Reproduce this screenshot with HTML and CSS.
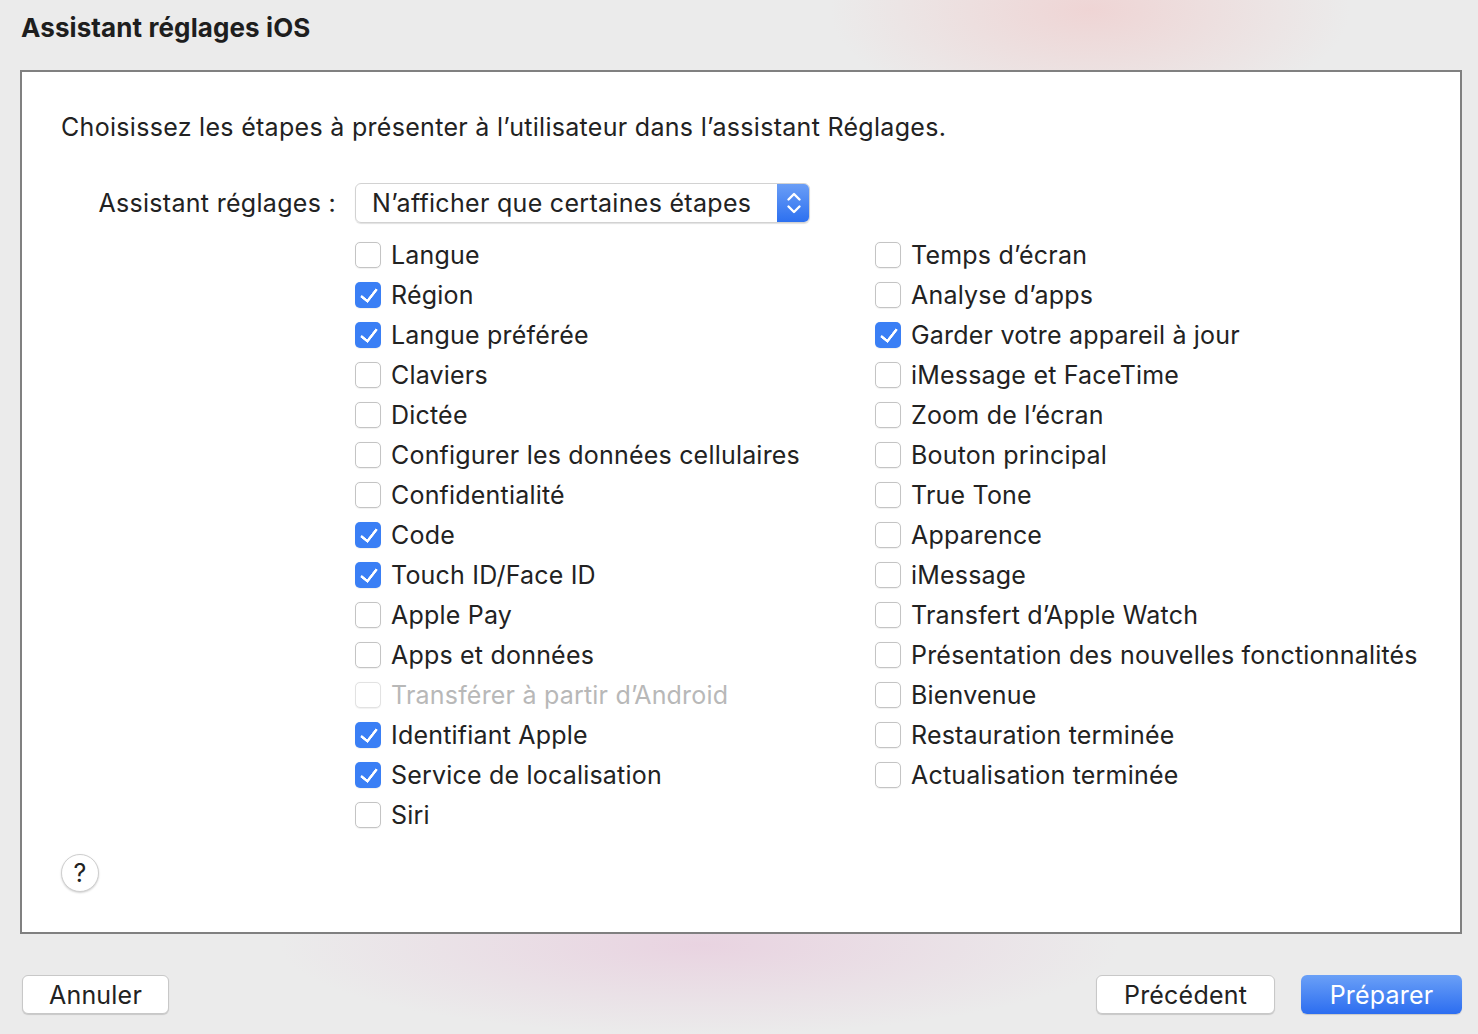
FILE: index.html
```html
<!DOCTYPE html>
<html lang="fr">
<head>
<meta charset="utf-8">
<title>Assistant réglages iOS</title>
<link rel="stylesheet" href="styles.css">
</head>
<body>
<div class="window">
  <h1 class="title">Assistant réglages iOS</h1>
  <div class="panel">
    <p class="desc">Choisissez les étapes à présenter à l’utilisateur dans l’assistant Réglages.</p>
    <div class="form-row">
      <span class="form-label">Assistant réglages :</span>
      <div class="popup">
        <span class="popup-text">N’afficher que certaines étapes</span>
        <span class="popup-arrows">
          <svg width="18" height="28" viewBox="0 0 18 28"><path d="M3.5 10.5 L9 5 L14.5 10.5 M3.5 17.5 L9 23 L14.5 17.5" fill="none" stroke="#fff" stroke-width="2.4" stroke-linecap="round" stroke-linejoin="round"/></svg>
        </span>
      </div>
    </div>
    <div class="checks">
      <div class="col">
        <label class="check"><span class="box"></span>Langue</label>
        <label class="check"><span class="box on"></span>Région</label>
        <label class="check"><span class="box on"></span>Langue préférée</label>
        <label class="check"><span class="box"></span>Claviers</label>
        <label class="check"><span class="box"></span>Dictée</label>
        <label class="check"><span class="box"></span>Configurer les données cellulaires</label>
        <label class="check"><span class="box"></span>Confidentialité</label>
        <label class="check"><span class="box on"></span>Code</label>
        <label class="check"><span class="box on"></span>Touch ID/Face ID</label>
        <label class="check"><span class="box"></span>Apple Pay</label>
        <label class="check"><span class="box"></span>Apps et données</label>
        <label class="check disabled"><span class="box"></span>Transférer à partir d’Android</label>
        <label class="check"><span class="box on"></span>Identifiant Apple</label>
        <label class="check"><span class="box on"></span>Service de localisation</label>
        <label class="check"><span class="box"></span>Siri</label>
      </div>
      <div class="col">
        <label class="check"><span class="box"></span>Temps d’écran</label>
        <label class="check"><span class="box"></span>Analyse d’apps</label>
        <label class="check"><span class="box on"></span>Garder votre appareil à jour</label>
        <label class="check"><span class="box"></span>iMessage et FaceTime</label>
        <label class="check"><span class="box"></span>Zoom de l’écran</label>
        <label class="check"><span class="box"></span>Bouton principal</label>
        <label class="check"><span class="box"></span>True Tone</label>
        <label class="check"><span class="box"></span>Apparence</label>
        <label class="check"><span class="box"></span>iMessage</label>
        <label class="check"><span class="box"></span>Transfert d’Apple Watch</label>
        <label class="check"><span class="box"></span>Présentation des nouvelles fonctionnalités</label>
        <label class="check"><span class="box"></span>Bienvenue</label>
        <label class="check"><span class="box"></span>Restauration terminée</label>
        <label class="check"><span class="box"></span>Actualisation terminée</label>
      </div>
    </div>
    <button class="help">?</button>
  </div>
  <div class="footer">
    <button class="btn cancel">Annuler</button>
    <div class="right">
      <button class="btn">Précédent</button>
      <button class="btn primary">Préparer</button>
    </div>
  </div>
</div>
</body>
</html>
```
FILE: styles.css
```css
html, body {
  margin: 0;
  padding: 0;
  height: 100%;
}
body {
  font-family: Inter, "Noto Sans", "Liberation Sans", sans-serif;
  color: #222;
  background-color: #ebebeb;
  background-image:
    radial-gradient(ellipse 260px 110px at 1090px 10px, rgba(240, 205, 205, 0.75), rgba(240, 205, 205, 0) 100%),
    radial-gradient(ellipse 420px 90px at 700px 945px, rgba(232, 205, 222, 0.8), rgba(232, 205, 222, 0) 100%);
  overflow: hidden;
}
.window {
  width: 1478px;
  height: 1034px;
  box-sizing: border-box;
  padding: 0 16px 0 20px;
  display: flex;
  flex-direction: column;
}
.title {
  margin: 12px 0 0 1px;
  font-size: 26px;
  font-weight: 700;
  letter-spacing: 0.1px;
  color: #1e1e1e;
  line-height: 32px;
  height: 58px;
}
.panel {
  background: #fff;
  border: 2px solid #808080;
  height: 864px;
  box-sizing: border-box;
  padding: 0 0 0 39px;
  display: flex;
  flex-direction: column;
}
.desc {
  margin: 38px 0 0 0;
  font-size: 25px;
  letter-spacing: 0.3px;
  line-height: 34px;
  color: #222;
}
.form-row {
  display: flex;
  align-items: center;
  margin-top: 39px;
  height: 40px;
}
.form-label {
  width: 275px;
  text-align: right;
  font-size: 25px;
  letter-spacing: 0.3px;
  margin-right: 19px;
}
.popup {
  width: 455px;
  height: 40px;
  box-sizing: border-box;
  border: 1px solid #d2d2d2;
  border-radius: 6px;
  box-shadow: 0 1px 1px rgba(0,0,0,0.12);
  display: flex;
  align-items: stretch;
  overflow: hidden;
}
.popup-text {
  flex: 1;
  font-size: 25px;
  padding-left: 16px;
  display: flex;
  align-items: center;
  letter-spacing: 0.3px;
}
.popup-arrows {
  width: 33px;
  background: linear-gradient(#6c9ff6, #2b6ff0);
  display: flex;
  align-items: center;
  justify-content: center;
  margin: -1px -1px -1px 0;
}
.checks {
  display: flex;
  margin-left: 294px;
  margin-top: 12px;
}
.col {
  display: flex;
  flex-direction: column;
}
.col:first-child {
  width: 520px;
}
.check {
  height: 40px;
  display: flex;
  align-items: center;
  font-size: 25px;
  color: #222;
  letter-spacing: 0.2px;
}
.box {
  width: 26px;
  height: 26px;
  box-sizing: border-box;
  border: 1px solid #c4c4c4;
  border-radius: 5px;
  background: #fff;
  margin-right: 10px;
  flex: none;
  box-shadow: 0 0.5px 1px rgba(0,0,0,0.06);
  position: relative;
}
.box.on {
  border: none;
  background: #3a7ff5;
}
.box.on::after {
  content: "";
  position: absolute;
  left: 9px;
  top: 3px;
  width: 7px;
  height: 14px;
  border: solid #fff;
  border-width: 0 3px 3px 0;
  border-radius: 1px;
  transform: rotate(38deg);
}
.check.disabled {
  color: #b8b8b8;
}
.check.disabled .box {
  border-color: #e2e2e2;
}
.help {
  margin-top: 19px;
  width: 38px;
  height: 38px;
  border-radius: 50%;
  border: 1px solid #cfcfcf;
  background: #fff;
  box-shadow: 0 1px 2px rgba(0,0,0,0.18);
  font-family: Inter, "Noto Sans", sans-serif;
  font-size: 25px;
  color: #222;
  padding: 0;
  display: flex;
  align-items: center;
  justify-content: center;
}
.footer {
  display: flex;
  justify-content: space-between;
  align-items: center;
  margin-top: 41px;
}
.right {
  display: flex;
  gap: 26px;
}
.btn {
  height: 39px;
  box-sizing: border-box;
  border: 1px solid #c8c8c8;
  border-radius: 6px;
  background: #fff;
  box-shadow: 0 1px 1px rgba(0,0,0,0.15);
  font-family: Inter, "Noto Sans", sans-serif;
  font-size: 25px;
  letter-spacing: 0.2px;
  color: #222;
  padding: 0;
}
.cancel {
  width: 147px;
  margin-left: 2px;
}
.right .btn {
  width: 179px;
}
.right .primary {
  width: 161px;
  border: none;
  color: #fff;
  background: linear-gradient(#6aa0f7, #2c6df0);
}
```
